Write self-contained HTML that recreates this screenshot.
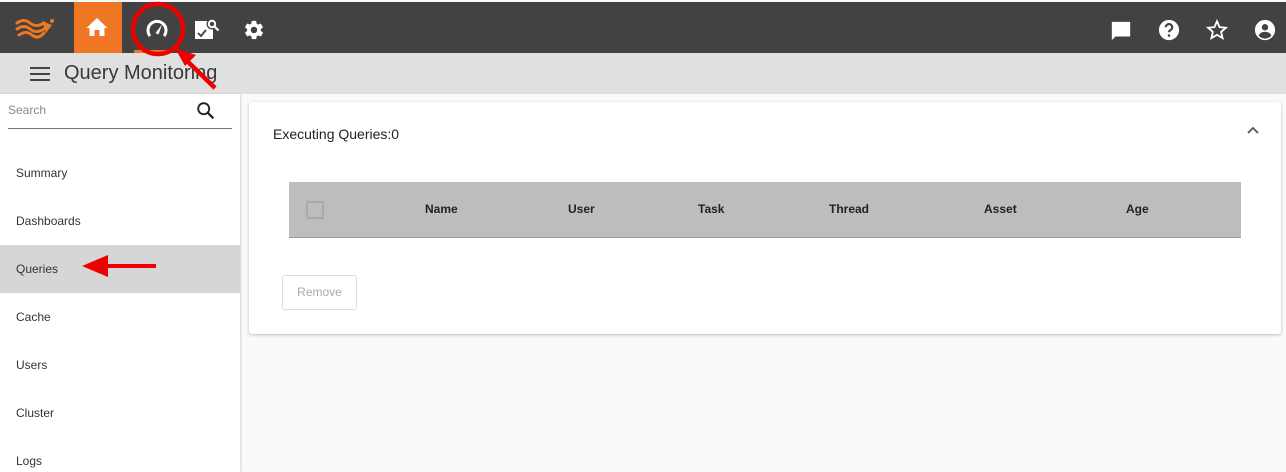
<!DOCTYPE html>
<html><head><meta charset="utf-8"><style>
*{margin:0;padding:0;box-sizing:border-box}
html,body{width:1286px;height:472px;overflow:hidden}
body{background:#fafafa;font-family:"Liberation Sans",sans-serif;position:relative}
.top{position:absolute;left:0;top:2px;width:1286px;height:51px;background:#424242}
.home{position:absolute;left:74px;top:2px;width:48px;height:51px;background:#ef7622}
.hdr{position:absolute;left:0;top:53px;width:1286px;height:41px;background:#e0e0e0}
.side{position:absolute;left:0;top:94px;width:240px;height:378px;background:#fff;box-shadow:1px 0 2px rgba(0,0,0,.15)}
.item{position:absolute;left:0;width:240px;height:48px;font-size:12px;color:#333;padding-left:16px;line-height:48px}
.card{position:absolute;left:249px;top:102px;width:1032px;height:232px;background:#fff;border-radius:3px;box-shadow:0 1px 3px rgba(0,0,0,.25)}
.th{position:absolute;top:0;font-size:12px;font-weight:bold;color:#222;line-height:55px}
svg{position:absolute}
</style></head><body>
<div class="top"></div>
<div class="home"></div>
<svg style="left:14px;top:15px" width="46" height="24" viewBox="0 0 46 24"><g fill="none" stroke="#ef7622" stroke-width="3" stroke-linecap="round"><path d="M3 8 Q10 3 16 8 T30 8"/><path d="M3 14 Q10 9 16 14 T30 14"/><path d="M5 20 Q12 15 18 20 T30 18"/></g><circle cx="38" cy="6" r="2" fill="#ef7622"/><path d="M28 6 L38 10 L32 18Z" fill="#ef7622"/></svg>
<svg style="left:85px;top:16px" width="24" height="22" viewBox="0 0 24 22"><path d="M9.5 20v-6h5v6h5v-8h3L12 2 1.5 12h3v8z" fill="#fff"/></svg>
<svg style="left:145px;top:18px" width="24" height="22" viewBox="0 0 24 22"><path d="M5 18 A9 9 0 1 1 19 18" fill="none" stroke="#fff" stroke-width="3"/><path d="M10.5 15 L17 6.5 L13.5 16.5Z" fill="#fff"/></svg>
<div style="position:absolute;left:134px;top:50px;width:36px;height:3px;background:#ef7622"></div>
<svg style="left:194px;top:17px" width="26" height="24" viewBox="0 0 26 24"><rect x="1" y="4" width="18" height="18" fill="#fff"/><circle cx="18" cy="7" r="5.5" fill="#424242"/><circle cx="18" cy="7" r="3.2" fill="none" stroke="#fff" stroke-width="2"/><path d="M20.5 9.5 L24.5 13.5" stroke="#fff" stroke-width="2.2"/><path d="M4 16 L7 19 L12 13" fill="none" stroke="#424242" stroke-width="1.8"/></svg>
<svg style="left:243px;top:19px" width="22" height="22" viewBox="0 0 24 24"><path fill="#fff" d="M19.4 13c.04-.3.06-.6.06-1s-.02-.7-.06-1l2.1-1.6c.2-.15.24-.42.12-.64l-2-3.46c-.12-.22-.39-.3-.61-.22l-2.5 1c-.52-.4-1.080-.73-1.69-.98l-.38-2.65C14.4 2.2 14.2 2 13.96 2h-4c-.25 0-.46.18-.49.42l-.38 2.650c-.61.25-1.17.59-1.69.98l-2.5-1c-.23-.09-.49 0-.61.22l-2 3.46c-.13.22-.07.49.12.64L4.57 11c-.04.32-.07.65-.07.98s.02.66.06.98l-2.1 1.65c-.19.15-.24.42-.12.64l2 3.46c.12.22.39.3.61.22l2.5-1c.52.4 1.08.73 1.69.98l.38 2.65c.03.24.24.42.49.42h4c.25 0 .46-.18.49-.42l.38-2.65c.61-.25 1.17-.59 1.69-.98l2.5 1c.23.09.49 0 .61-.22l2-3.46c.12-.22.07-.49-.12-.64L19.4 13zM12 15.5c-1.93 0-3.5-1.57-3.5-3.5s1.57-3.5 3.5-3.5 3.5 1.57 3.5 3.5-1.57 3.5-3.5 3.5z"/></svg>
<svg style="left:1110px;top:20px" width="22" height="22" viewBox="0 0 24 24"><path d="M2 2h20v16H6l-4 4z" fill="#fff"/></svg>
<svg style="left:1158px;top:19px" width="22" height="22" viewBox="0 0 24 24"><circle cx="12" cy="12" r="11" fill="#fff"/><path d="M8.5 9a3.5 3.5 0 1 1 5 3.2c-1 .5-1.5 1-1.5 2.3" fill="none" stroke="#424242" stroke-width="2.4"/><circle cx="12" cy="18" r="1.4" fill="#424242"/></svg>
<svg style="left:1206px;top:19px" width="22" height="22" viewBox="0 0 24 24"><path d="M12 2.5l2.8 6.4 6.9.6-5.2 4.6 1.6 6.8L12 17.3l-6.1 3.6 1.6-6.8L2.3 9.5l6.9-.6z" fill="none" stroke="#fff" stroke-width="2"/></svg>
<svg style="left:1254px;top:19px" width="22" height="22" viewBox="0 0 24 24"><circle cx="12" cy="12" r="11" fill="#fff"/><circle cx="12" cy="9" r="3.5" fill="#424242"/><path d="M5 18c1.5-3 4-4 7-4s5.5 1 7 4a9 9 0 0 1-14 0z" fill="#424242"/></svg>
<div class="hdr"></div>
<svg style="left:30px;top:67px" width="20" height="14" viewBox="0 0 20 14"><path d="M0 1h20M0 7h20M0 13h20" stroke="#444" stroke-width="2"/></svg>
<div style="position:absolute;left:64px;top:62px;font-size:20px;color:#383838">Query Monitoring</div>
<div class="side">
<div style="position:absolute;left:8px;top:9px;font-size:12px;color:#888">Search</div>
<svg style="left:195px;top:6px" width="22" height="22" viewBox="0 0 24 24"><circle cx="9.5" cy="9.5" r="6" fill="none" stroke="#222" stroke-width="2"/><path d="M14 14l6 6" stroke="#222" stroke-width="2.4"/></svg>
<div style="position:absolute;left:8px;top:34px;width:224px;height:1px;background:#777"></div>
<div class="item" style="top:55px">Summary</div>
<div class="item" style="top:103px">Dashboards</div>
<div class="item" style="top:151px;background:#d6d6d6">Queries</div>
<div class="item" style="top:199px">Cache</div>
<div class="item" style="top:247px">Users</div>
<div class="item" style="top:295px">Cluster</div>
<div class="item" style="top:343px">Logs</div>
</div>
<div class="card">
<div style="position:absolute;left:24px;top:24px;font-size:14px;color:#222">Executing Queries:0</div>
<svg style="left:997px;top:23px" width="14" height="10" viewBox="0 0 14 10"><path d="M2 8l5-5 5 5" fill="none" stroke="#555" stroke-width="1.8"/></svg>
<div style="position:absolute;left:40px;top:80px;width:952px;height:56px;background:#bdbdbd;border-bottom:1px solid #999">
<div style="position:absolute;left:17px;top:19px;width:18px;height:18px;border:2px solid #aaa;border-radius:2px"></div>
<div class="th" style="left:136px">Name</div>
<div class="th" style="left:279px">User</div>
<div class="th" style="left:409px">Task</div>
<div class="th" style="left:540px">Thread</div>
<div class="th" style="left:695px">Asset</div>
<div class="th" style="left:837px">Age</div>
</div>
<div style="position:absolute;left:33px;top:173px;width:75px;height:35px;border:1px solid #ddd;border-radius:3px;font-size:12px;color:#aaa;text-align:center;line-height:33px">Remove</div>
</div>
<svg style="left:0;top:0" width="1286" height="472"><circle cx="158" cy="29" r="25" fill="none" stroke="#e00" stroke-width="4.5"/><path d="M215 88 L184 58" stroke="#e00" stroke-width="4.5"/><path d="M175 48 L196 55 L185 66Z" fill="#e00"/><path d="M156 266 L100 266" stroke="#e00" stroke-width="4"/><path d="M82 266 L108 255 L108 277Z" fill="#e00"/></svg>
</body></html>
